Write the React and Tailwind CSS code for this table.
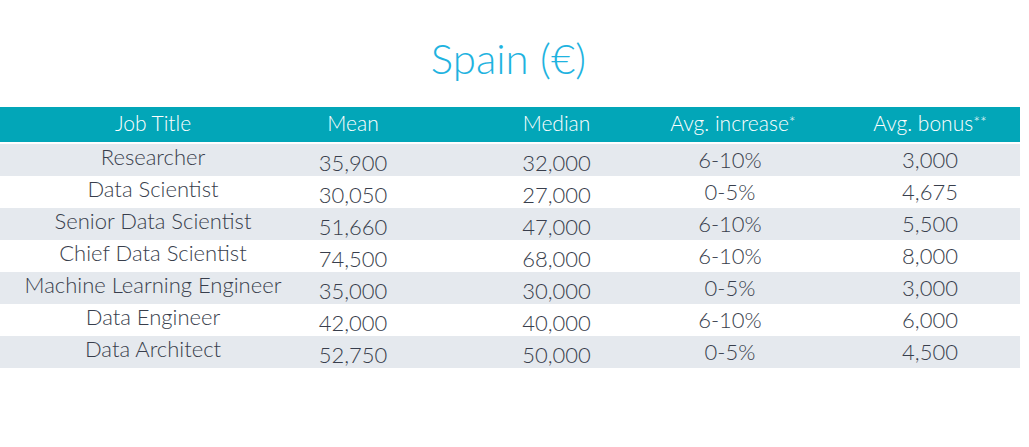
import React from 'react';

const rows = [
  ['Researcher', '35,900', '32,000', '6-10%', '3,000'],
  ['Data Scientist', '30,050', '27,000', '0-5%', '4,675'],
  ['Senior Data Scientist', '51,660', '47,000', '6-10%', '5,500'],
  ['Chief Data Scientist', '74,500', '68,000', '6-10%', '8,000'],
  ['Machine Learning Engineer', '35,000', '30,000', '0-5%', '3,000'],
  ['Data Engineer', '42,000', '40,000', '6-10%', '6,000'],
  ['Data Architect', '52,750', '50,000', '0-5%', '4,500'],
];

const grid = 'grid grid-cols-[306px_94px_243px_174px_203px]';

function Cell({ children, className = '' }) {
  return (
    <div className={`flex justify-center whitespace-nowrap ${className}`}>
      <span>{children}</span>
    </div>
  );
}

export default function App() {
  return (
    <div
      className="w-[1029px] h-[447px] bg-white overflow-hidden"
      style={{ fontFamily: 'Lato, "Open Sans", sans-serif' }}
    >
      {/* Title */}
      <h1 className="pt-[34px] h-[107px] text-center text-[42px] leading-[48px] font-light text-[#1fb3e0] pr-[12px]">
        Spain (€)
      </h1>

      <div className="w-[1020px]">
        {/* Header */}
        <div className={`${grid} h-[35px] items-center bg-[#02a6b8] text-white text-[21px] font-light leading-none`}>
          <Cell className="pb-[5px]">Job Title</Cell>
          <Cell className="pb-[5px]">Mean</Cell>
          <Cell className="pl-[70px] pb-[5px]">Median</Cell>
          <Cell className="pb-[5px] pl-[6px]">
            Avg. increase<sup className="text-[16px] relative top-[-3px]">*</sup>
          </Cell>
          <Cell className="pl-[23px] pb-[5px]">
            Avg. bonus<sup className="text-[16px] relative top-[-3px]">**</sup>
          </Cell>
        </div>

        {/* Rows */}
        <div className="mt-[2px]">
          {rows.map((r, i) => (
            <div
              key={r[0]}
              className={`${grid} h-[32px] text-[22px] font-light leading-none text-[#383e4c] ${
                i % 2 === 0 ? 'bg-[#e5e9ee]' : 'bg-white'
              }`}
            >
              <Cell className="pt-[2px]">{r[0]}</Cell>
              <Cell className="pt-[8px]">{r[1]}</Cell>
              <Cell className="pl-[70px] pt-[8px]">{r[2]}</Cell>
              <Cell className="pt-[5px]">{r[3]}</Cell>
              <Cell className="pl-[23px] pt-[5px]">{r[4]}</Cell>
            </div>
          ))}
        </div>
      </div>
    </div>
  );
}
